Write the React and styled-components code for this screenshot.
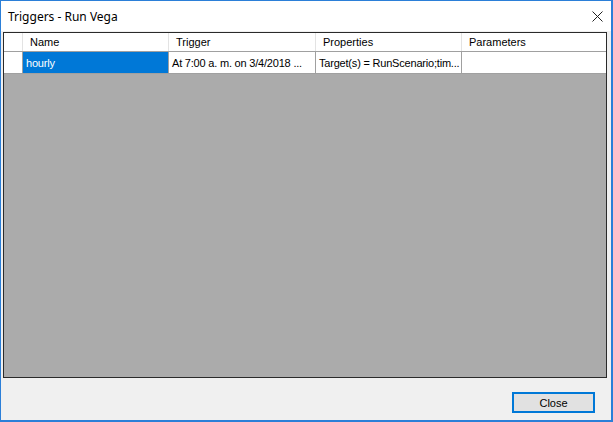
import React from "react";
import styled, { createGlobalStyle } from "styled-components";

const Global = createGlobalStyle`
  html, body { margin: 0; padding: 0; background: #ffffff; }
  * { box-sizing: border-box; }
`;

const Window = styled.div`
  width: 613px;
  height: 422px;
  display: flex;
  flex-direction: column;
  background: #f0f0f0;
  border-style: solid;
  border-color: #2b7fd8;
  border-width: 1px 2px 2px 1px;
  font-family: "Liberation Sans", Arial, sans-serif;
`;

const TitleBar = styled.div`
  height: 30px;
  flex: none;
  background: #ffffff;
  display: flex;
  align-items: center;
  justify-content: space-between;
  padding: 0 8px 0 7px;
`;

const Title = styled.span`
  font-family: "Noto Sans", "Liberation Sans", sans-serif;
  font-size: 12px;
  color: #000;
`;

const CloseX = styled.svg`
  width: 11px;
  height: 11px;
`;

const Body = styled.div`
  flex: 1;
  display: flex;
  flex-direction: column;
  padding: 1px 4px 8px 2px;
`;

const Grid = styled.div`
  flex: none;
  height: 346px;
  background: #ababab;
  border: 1px solid #2a2a2a;
  display: flex;
  flex-direction: column;
  font-size: 11px;
  overflow: hidden;
`;

const Row = styled.div`
  display: flex;
  height: ${(p) => p.h}px;
  flex: none;
  background: #ffffff;
  border-bottom: 1px solid ${(p) => p.line};
`;

const Cell = styled.div`
  width: ${(p) => (p.w ? `${p.w}px` : "auto")};
  flex: ${(p) => (p.w ? "none" : "1")};
  border-right: ${(p) => (p.last ? "none" : `1px solid ${p.line}`)};
  padding-left: ${(p) => p.pad}px;
  display: flex;
  align-items: center;
  white-space: nowrap;
  overflow: hidden;
  letter-spacing: ${(p) => (p.tight ? "-0.2px" : "0")};
  color: ${(p) => (p.selected ? "#ffffff" : "#000000")};
  background: ${(p) => (p.selected ? "#0078d7" : "#ffffff")};
`;

const Footer = styled.div`
  display: flex;
  justify-content: flex-end;
  padding: 14px 12px 0 0;
`;

const Button = styled.button`
  width: 83px;
  height: 21px;
  background: #e1e1e1;
  border: 2px solid #0078d7;
  font-family: "Liberation Sans", Arial, sans-serif;
  font-size: 11px;
  color: #000;
  padding: 0;
  display: flex;
  align-items: center;
  justify-content: center;
`;

const cols = [
  { key: "rh", w: 19 },
  { key: "name", w: 146, label: "Name" },
  { key: "trigger", w: 147, label: "Trigger" },
  { key: "props", w: 146, label: "Properties" },
  { key: "params", label: "Parameters", last: true },
];

const data = {
  name: "hourly",
  trigger: "At 7:00 a. m. on 3/4/2018  ...",
  props: "Target(s) = RunScenario;tim...",
  params: "",
};

export default function App() {
  return (
    <>
      <Global />
      <Window>
        <TitleBar>
          <Title>Triggers - Run Vega</Title>
          <CloseX viewBox="0 0 11 11">
            <path d="M0.5 0.5 L10.5 10.5 M10.5 0.5 L0.5 10.5" stroke="#222" strokeWidth="1" fill="none" />
          </CloseX>
        </TitleBar>
        <Body>
          <Grid>
            <Row h={19} line="#a0a0a0">
              {cols.map((c) => (
                <Cell key={c.key} w={c.w} last={c.last} line="#e3e3e3" pad={7}>
                  {c.label}
                </Cell>
              ))}
            </Row>
            <Row h={22} line="#a0a0a0">
              {cols.map((c) => (
                <Cell
                  key={c.key}
                  w={c.w}
                  last={c.last}
                  line="#a0a0a0"
                  pad={3}
                  tight
                  selected={c.key === "name"}
                >
                  {c.key === "rh" ? "" : data[c.key]}
                </Cell>
              ))}
            </Row>
          </Grid>
          <Footer>
            <Button>Close</Button>
          </Footer>
        </Body>
      </Window>
    </>
  );
}
